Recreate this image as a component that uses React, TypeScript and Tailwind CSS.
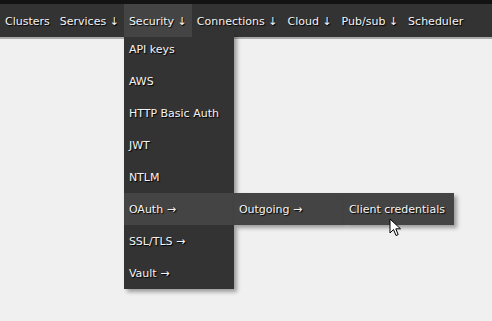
import React from 'react';

const navItems = [
  { label: 'Clusters' },
  { label: 'Services ↓' },
  { label: 'Security ↓', open: true },
  { label: 'Connections ↓' },
  { label: 'Cloud ↓' },
  { label: 'Pub/sub ↓' },
  { label: 'Scheduler' },
];

const securityItems = ['API keys', 'AWS', 'HTTP Basic Auth', 'JWT', 'NTLM', 'OAuth →', 'SSL/TLS →', 'Vault →'];

function Cursor() {
  return (
    <svg className="absolute left-[389px] top-[218px] z-30" width="13" height="20" viewBox="0 0 13 20">
      <path d="M1 1 L1 15 L4.5 11.5 L7 17.5 L9.2 16.6 L6.8 10.8 L11.5 10.8 Z" fill="#fff" stroke="#000" strokeWidth="1" strokeLinejoin="round" />
    </svg>
  );
}

export default function App() {
  return (
    <div className="relative w-[492px] h-[321px] overflow-hidden bg-[#f0f0f0] font-['DejaVu_Sans',sans-serif] text-[11px] text-[#f4f4f4] [text-shadow:1px_1px_1px_#000]">
      <div className="h-[4px] bg-[#131313]" />
      {/* Top menu */}
      <nav className="flex h-[33px] bg-[#333]">
        {navItems.map(item => (
          <div key={item.label} className="relative h-full">
            <div className={`relative z-10 flex h-full items-center px-[5px] pt-[3px] whitespace-nowrap ${item.open ? 'bg-[#444]' : ''}`}>
              {item.label}
            </div>
            {item.open && (
              <div className="absolute left-0 top-[29px] z-0 w-[110px] bg-[#333] shadow-[3px_3px_4px_rgba(0,0,0,0.35)]">
                {securityItems.map(s => (
                  <div
                    key={s}
                    className={`relative flex h-8 items-center px-[5px] pt-[3px] whitespace-nowrap ${s === 'OAuth →' ? 'bg-[#444]' : ''}`}
                  >
                    {s}
                    {s === 'OAuth →' && (
                      <div className="absolute left-[110px] top-0 flex">
                        <div className="flex h-8 w-[110px] items-center bg-[#444] px-[5px] pt-[3px] shadow-[3px_3px_4px_rgba(0,0,0,0.35)]">
                          Outgoing →
                        </div>
                        <div className="flex h-8 w-[110px] items-center bg-[#444] px-[5px] pt-[3px] shadow-[3px_3px_4px_rgba(0,0,0,0.35)]">
                          Client credentials
                        </div>
                      </div>
                    )}
                  </div>
                ))}
              </div>
            )}
          </div>
        ))}
      </nav>
      <div className="h-[2px] bg-[#aaa]" />
      <Cursor />
    </div>
  );
}
